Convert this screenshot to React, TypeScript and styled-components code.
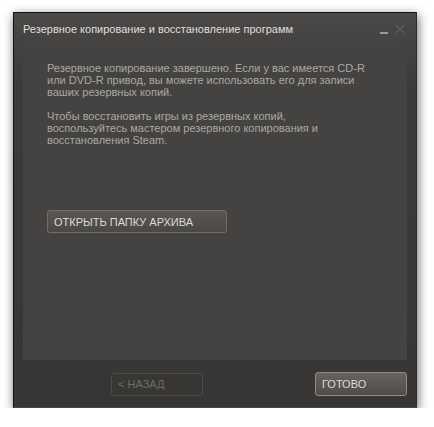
import React from "react";
import styled, { createGlobalStyle } from "styled-components";

const Global = createGlobalStyle`
  html, body { margin: 0; padding: 0; background: #ffffff; }
  body { font-family: "Liberation Sans", Arial, sans-serif; }
`;

const Stage = styled.div`
  padding: 12px 0 0 13px;
`;

const Window = styled.div`
  width: 404px;
  height: 396px;
  box-sizing: border-box;
  border: 1px solid #111111;
  border-bottom-color: #3a4a5c;
  border-right-color: #2a2e33;
  background: linear-gradient(#4b4947 0px, #3d3b39 70px, #383634 100%);
  box-shadow: 1px 3px 10px rgba(0, 0, 0, 0.6);
  display: flex;
  flex-direction: column;
`;

const TitleBar = styled.div`
  height: 32px;
  display: flex;
  align-items: center;
  padding: 0 11px 0 9px;
  box-sizing: border-box;
`;

const Title = styled.div`
  flex: 1;
  color: #e0dedb;
  font-size: 11px;
  white-space: nowrap;
`;

const WinControls = styled.div`
  display: flex;
  align-items: center;
  gap: 6px;
`;

const Panel = styled.div`
  margin: 0 9px;
  height: 315px;
  background: #454341;
  padding: 17px 24px 0 24px;
  box-sizing: border-box;
  display: flex;
  flex-direction: column;
`;

const Para = styled.p<{ $last?: boolean }>`
  margin: 0 0 ${(p) => (p.$last ? 0 : 12)}px 0;
  color: #aaa8a4;
  font-size: 11px;
  line-height: 12px;
  white-space: nowrap;
`;

const Button = styled.button<{ $w: number; $primary?: boolean; $disabled?: boolean }>`
  width: ${(p) => p.$w}px;
  height: ${(p) => (p.$primary ? 24 : 23)}px;
  box-sizing: border-box;
  text-align: left;
  padding: 0 0 0 6px;
  font-family: "Liberation Sans", Arial, sans-serif;
  font-size: 11px;
  white-space: nowrap;
  border-radius: 3px;
  color: ${(p) => (p.$disabled ? "#6e6c69" : "#dcdad6")};
  border: 1px solid ${(p) => (p.$disabled ? "#4d4b48" : p.$primary ? "#8f8c88" : "#716e6a")};
  background: ${(p) =>
    p.$disabled
      ? "transparent"
      : p.$primary
      ? "linear-gradient(#66635f, #4f4c49)"
      : "linear-gradient(#5a5753, #4a4845)"};
`;

const OpenRow = styled.div`
  margin-top: 64px;
`;

const Footer = styled.div`
  display: flex;
  align-items: center;
  padding: 12px 9px 0 97px;
`;

const Spacer = styled.div`
  flex: 1;
`;

export default function App() {
  return (
    <>
      <Global />
      <Stage>
        <Window>
          <TitleBar>
            <Title>Резервное копирование и восстановление программ</Title>
            <WinControls>
              <svg width="9" height="10" viewBox="0 0 9 10">
                <rect x="0" y="8" width="8" height="2" fill="#9c9a97" />
              </svg>
              <svg width="10" height="10" viewBox="0 0 10 10">
                <path d="M1 1 L9 9 M9 1 L1 9" stroke="#5e5c59" strokeWidth="1.3" />
              </svg>
            </WinControls>
          </TitleBar>
          <Panel>
            <Para>
              Резервное копирование завершено. Если у вас имеется CD-R
              <br />
              или DVD-R привод, вы можете использовать его для записи
              <br />
              ваших резервных копий.
            </Para>
            <Para $last>
              Чтобы восстановить игры из резервных копий,
              <br />
              воспользуйтесь мастером резервного копирования и
              <br />
              восстановления Steam.
            </Para>
            <OpenRow>
              <Button $w={180}>ОТКРЫТЬ ПАПКУ АРХИВА</Button>
            </OpenRow>
          </Panel>
          <Footer>
            <Button $w={92} $disabled>
              &lt; НАЗАД
            </Button>
            <Spacer />
            <Button $w={92} $primary>
              ГОТОВО
            </Button>
          </Footer>
        </Window>
      </Stage>
    </>
  );
}
